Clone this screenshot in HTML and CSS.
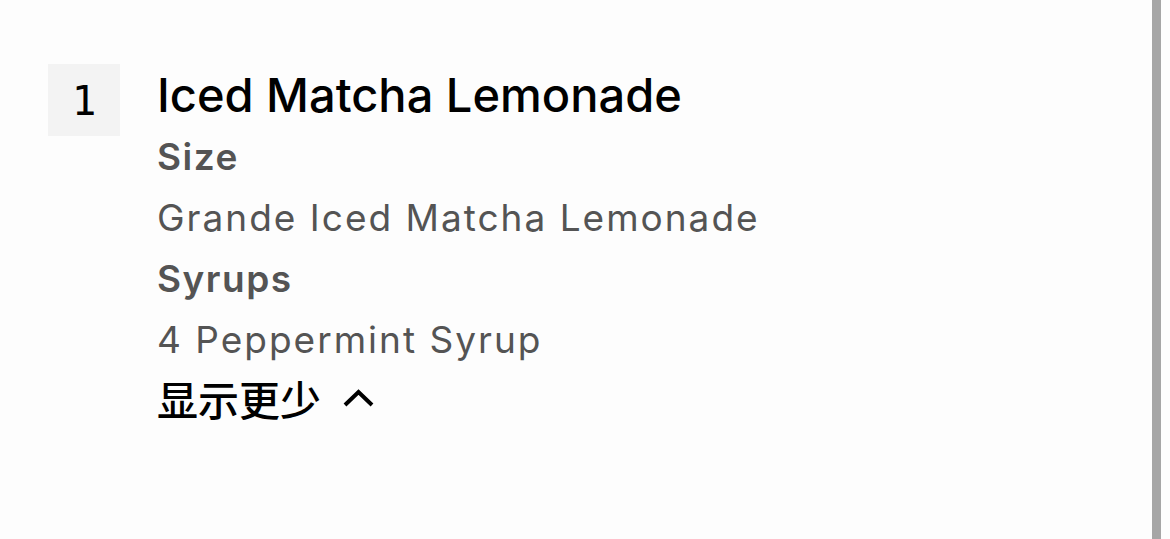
FILE: index.html
```html
<!DOCTYPE html>
<html lang="zh">
<head>
<meta charset="utf-8">
<link rel="stylesheet" href="styles.css">
</head>
<body>
<div class="page">
  <div class="item">
    <div class="qty">1</div>
    <div class="details">
      <div class="title">Iced Matcha Lemonade</div>
      <div class="label">Size</div>
      <div class="value">Grande Iced Matcha Lemonade</div>
      <div class="label">Syrups</div>
      <div class="value">4 Peppermint Syrup</div>
      <div class="toggle">显示更少
        <svg class="chev" width="33" height="22" viewBox="0 0 33 22"><path d="M3 19 L16.5 6 L30 19" fill="none" stroke="#000" stroke-width="4"/></svg>
      </div>
    </div>
  </div>
  <div class="scrollbar"></div>
</div>
</body>
</html>
```

FILE: styles.css
```css
html, body {
  margin: 0;
  padding: 0;
  background: #fdfdfd;
}
.page {
  width: 1170px;
  height: 539px;
  display: flex;
  justify-content: space-between;
  font-family: Inter, "Noto Sans CJK SC", sans-serif;
}
.item {
  display: flex;
  gap: 37px;
  padding: 64px 0 0 48px;
}
.qty {
  width: 72px;
  height: 72px;
  background: #f3f3f3;
  display: flex;
  align-items: center;
  justify-content: center;
  font-family: "DejaVu Sans Mono", monospace;
  font-size: 41px;
  font-weight: 400;
  color: #000;
  box-sizing: border-box;
  padding-top: 2px;
}
.details {
  display: flex;
  flex-direction: column;
}
.title {
  font-size: 47px;
  font-weight: 500;
  color: #000;
  line-height: 62px;
}
.label {
  font-size: 37px;
  font-weight: 600;
  color: #545454;
  line-height: 61px;
  letter-spacing: 1.5px;
}
.value {
  font-size: 37px;
  color: #545454;
  line-height: 61px;
  letter-spacing: 2px;
}
.toggle {
  font-family: "Noto Sans CJK SC", sans-serif;
  font-size: 41px;
  font-weight: 500;
  color: #000;
  line-height: 56px;
  display: flex;
  align-items: center;
  gap: 21px;
}
.chev {
  display: block;
  margin-top: -2px;
}
.scrollbar {
  width: 9px;
  height: 539px;
  background: #a6a6a6;
  margin-right: 9px;
}
```
